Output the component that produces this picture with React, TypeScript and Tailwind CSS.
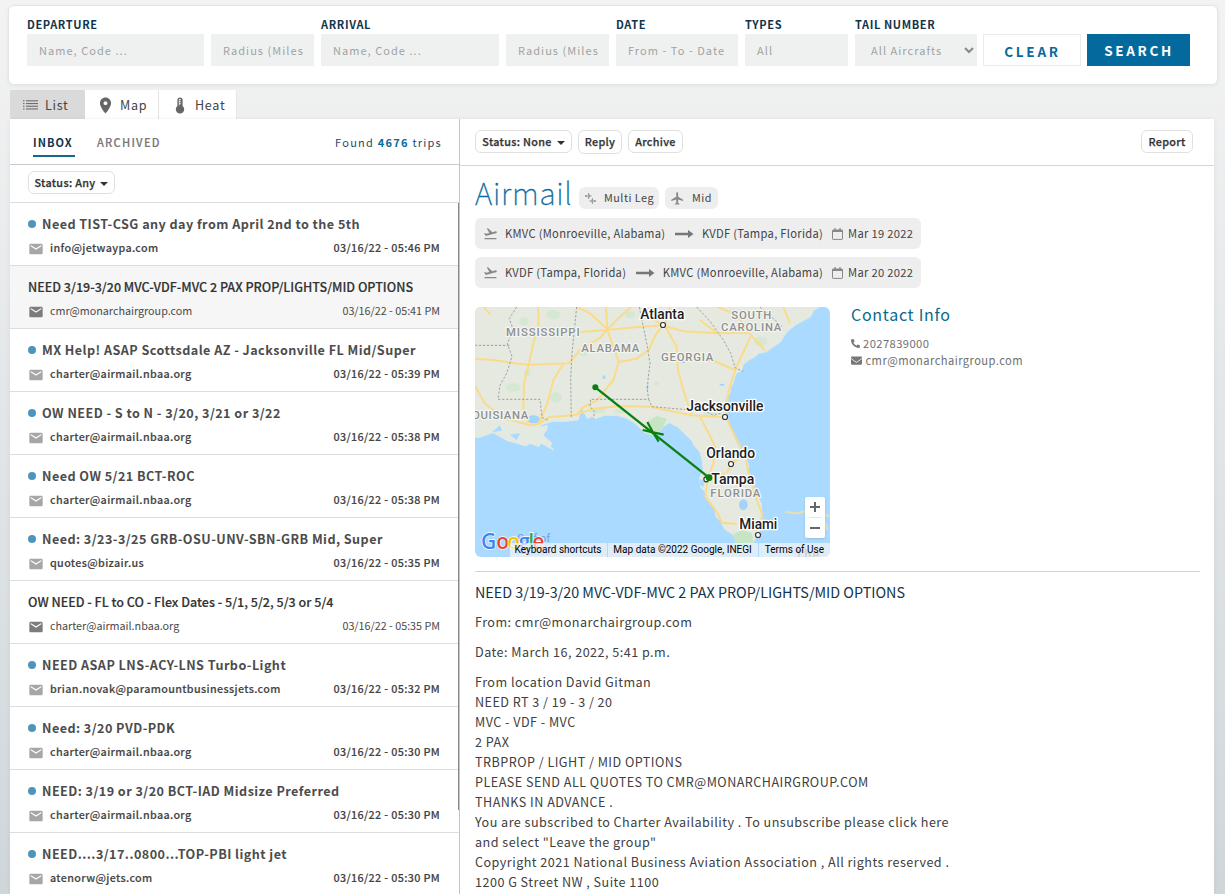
import React from "react";
import { MdEmail, MdFlight, MdFlightTakeoff, MdPlace } from "react-icons/md";
import { FaEnvelope, FaPhoneAlt } from "react-icons/fa";

type Trip = { title: string; from: string; time: string; read?: boolean; active?: boolean };

const trips: Trip[] = [
  { title: "Need TIST-CSG any day from April 2nd to the 5th", from: "info@jetwaypa.com", time: "03/16/22 - 05:46 PM" },
  { title: "NEED 3/19-3/20 MVC-VDF-MVC 2 PAX PROP/LIGHTS/MID OPTIONS", from: "cmr@monarchairgroup.com", time: "03/16/22 - 05:41 PM", read: true, active: true },
  { title: "MX Help! ASAP Scottsdale AZ - Jacksonville FL Mid/Super", from: "charter@airmail.nbaa.org", time: "03/16/22 - 05:39 PM" },
  { title: "OW NEED - S to N - 3/20, 3/21 or 3/22", from: "charter@airmail.nbaa.org", time: "03/16/22 - 05:38 PM" },
  { title: "Need OW 5/21 BCT-ROC", from: "charter@airmail.nbaa.org", time: "03/16/22 - 05:38 PM" },
  { title: "Need: 3/23-3/25 GRB-OSU-UNV-SBN-GRB Mid, Super", from: "quotes@bizair.us", time: "03/16/22 - 05:35 PM" },
  { title: "OW NEED - FL to CO - Flex Dates - 5/1, 5/2, 5/3 or 5/4", from: "charter@airmail.nbaa.org", time: "03/16/22 - 05:35 PM", read: true },
  { title: "NEED ASAP LNS-ACY-LNS Turbo-Light", from: "brian.novak@paramountbusinessjets.com", time: "03/16/22 - 05:32 PM" },
  { title: "Need: 3/20 PVD-PDK", from: "charter@airmail.nbaa.org", time: "03/16/22 - 05:30 PM" },
  { title: "NEED: 3/19 or 3/20 BCT-IAD Midsize Preferred", from: "charter@airmail.nbaa.org", time: "03/16/22 - 05:30 PM" },
  { title: "NEED....3/17..0800...TOP-PBI light jet", from: "atenorw@jets.com", time: "03/16/22 - 05:30 PM" },
];

const message = [
  "From location David Gitman",
  "NEED RT 3 / 19 - 3 / 20",
  "MVC - VDF - MVC",
  "2 PAX",
  "TRBPROP / LIGHT / MID OPTIONS",
  "PLEASE SEND ALL QUOTES TO CMR@MONARCHAIRGROUP.COM",
  "THANKS IN ADVANCE .",
  "You are subscribed to Charter Availability . To unsubscribe please click here",
  'and select "Leave the group"',
  "Copyright 2021 National Business Aviation Association , All rights reserved .",
  "1200 G Street NW , Suite 1100",
];

function Field({ label, text, className, textClass = "pl-3" }: { label?: string; text: string; className: string; textClass?: string }) {
  return (
    <div className={`shrink-0 ${className}`}>
      <div className="h-[18px] text-[11px] leading-[16px] font-bold tracking-[0.62px] text-[#12344a] whitespace-nowrap">{label}</div>
      <div className={`h-8 overflow-hidden bg-[#eff1f1] text-[11px] leading-[32px] tracking-[1.04px] whitespace-nowrap text-[#a0a3a3] ${textClass}`}>{text}</div>
    </div>
  );
}

function Caret() {
  return <span className="mt-[2px] h-0 w-0 border-x-4 border-t-4 border-x-transparent border-t-[#333]" />;
}

function Pill({ children, className = "" }: { children: React.ReactNode; className?: string }) {
  return (
    <button className={`flex h-[23px] items-center justify-center gap-[5px] rounded-[6px] border border-[#dfe1e1] bg-white text-[10.8px] leading-[21px] font-medium tracking-[0.32px] whitespace-nowrap text-[#333] [-webkit-text-stroke:0.25px_#333] ${className}`}>
      {children}
    </button>
  );
}

function ListIcon() {
  return (
    <svg width="15" height="10" viewBox="0 0 15 10" fill="#6c6c6c">
      {[0.3, 3, 5.7, 8.4].map((y) => (
        <g key={y}>
          <rect x="0" y={y} width="1.5" height="1.1" />
          <rect x="3" y={y} width="12" height="1.1" />
        </g>
      ))}
    </svg>
  );
}

function ThermoIcon() {
  return (
    <svg width="10" height="17" viewBox="0 0 10 17" fill="#666">
      <path d="M5 0.5a2.6 2.6 0 0 0-2.6 2.6v5.9a4.2 4.2 0 1 0 5.2 0V3.1A2.6 2.6 0 0 0 5 .5Z" />
      <path d="M4.2 2.5h1.6M4.2 4.6h1.6M4.2 6.7h1.6" stroke="#fff" strokeWidth="0.9" />
      <path d="M4.3 2.2v6" stroke="#fff" strokeWidth="0.7" />
    </svg>
  );
}

function LongArrow() {
  return (
    <svg width="19" height="10" viewBox="0 0 19 10" fill="#777">
      <path d="M0 3.8h13V1l5.5 4L13 9V6.2H0Z" />
    </svg>
  );
}

function CalendarIcon() {
  return (
    <svg width="11" height="12" viewBox="0 0 11 12" fill="none" stroke="#888">
      <rect x="0.5" y="2" width="10" height="9.4" rx="0.6" />
      <path d="M0.5 3h10" strokeWidth="2" />
      <path d="M3 0v2.5M8 0v2.5" strokeWidth="1.2" />
    </svg>
  );
}

function MultiLegIcon() {
  return (
    <svg width="11" height="12" viewBox="0 0 11 12" fill="none" stroke="#909090" strokeWidth="1.2">
      <path d="M0 4h6.5M3.4 1.2l0.9 2.8-0.9 2.8M0.9 2.9v2.2" />
      <path d="M4.4 9h6.4M7.7 6.4l-0.9 2.6 0.9 2.6M10 7.9v2.2" />
    </svg>
  );
}

function Leg({ from, to, date }: { from: string; to: string; date: string }) {
  return (
    <div className="flex h-[31px] w-[446px] items-center rounded-[6px] bg-[#eee] pl-2 text-[11.2px] leading-[31px] tracking-[0.28px] whitespace-nowrap text-[#444]">
      <MdFlightTakeoff className="mr-[7px] h-[15px] w-[15px] text-[#888]" />
      <span>{from}</span>
      <span className="mr-[7.5px] ml-[10px]"><LongArrow /></span>
      <span>{to}</span>
      <span className="mr-[5px] ml-[9px]"><CalendarIcon /></span>
      <span>{date}</span>
    </div>
  );
}

const land =
  "M15 21H1048L1030 32 1022 50 1000 62 978 74 960 88 946 102 932 126 908 142 888 156 866 160 858 168 834 182 818 196 816 212 800 218 794 232 790 248 782 262 780 280 766 298 762 318 764 340 772 362 786 392 800 428 814 458 832 484 836 500 828 508 844 546 862 586 874 612 876 650 872 688 862 708 848 729 800 732 790 704 764 688 752 664 738 650 734 622 712 594 704 574 692 562 688 536 700 508 696 480 690 456 672 436 664 420 640 398 622 380 598 368 580 380 570 394 546 404 524 398 508 382 490 366 468 354 440 346 404 346 376 356 364 350 352 356 344 340 330 344 324 360 290 364 250 364 214 374 212 382 232 376 230 392 214 404 226 412 246 430 240 440 252 450 232 440 214 428 206 440 180 430 168 438 140 430 112 422 90 410 70 398 50 404 30 412 15 412Z";

const roads = [
  "M15 176 70 180 134 190 178 194 240 192 296 190 M296 190 330 150 392 112 410 90 470 84 578 76",
  "M204 21 206 70 190 130 176 194 162 250 160 340 176 370",
  "M280 192 250 240 232 310 206 372 M15 258 44 310 100 354 180 376 206 372 236 352 320 344 336 324 380 302 430 240 446 186",
  "M408 21 412 90 430 140 446 186 500 176 536 150 556 106 578 76 M320 21 360 40 410 86 M484 21 450 50 412 88 M410 90 330 96",
  "M578 76 548 56 540 21 M578 76 640 94 742 100 836 98 M600 21 584 76 620 140 624 210 640 270 664 342",
  "M690 176 740 186 794 210 M742 100 690 60 M842 110 820 156 796 210 776 270 766 346 790 400 824 462 836 520 860 600 876 640 870 684",
  "M320 344 370 326 450 318 540 320 600 332 664 346 766 352 M690 350 716 400 736 440 730 490 712 540 706 590 740 636 756 668 800 672 M770 520 784 494 820 460 M720 540 764 520",
  "M742 21 800 44 836 98 884 150 M940 21 960 70 M40 21 62 44",
];

const borders = [
  "M140 21 118 56 130 90 112 130 126 170 110 220 90 256 84 298 H210L216 352 236 362",
  "M15 136H118 M320 21 306 160 302 240 304 356",
  "M508 21 532 140 540 190 534 240 532 270 536 298H362L360 320 374 336 370 356 M536 298 546 320 640 328 700 330 730 346 752 340",
  "M680 21 720 64 760 120 782 160 796 204 820 214 M870 21 920 64 936 80",
];

const greens: [number, number, number, number][] = [
  [250, 44, 20, 14], [162, 64, 14, 12], [130, 262, 22, 12], [258, 292, 18, 16], [382, 332, 26, 8], [480, 44, 14, 10],
  [872, 124, 20, 14], [720, 336, 22, 10], [340, 160, 12, 8], [172, 218, 10, 12], [560, 250, 8, 6], [450, 334, 16, 6],
];

const lakes: [number, number, number, number][] = [
  [820, 614, 13, 16], [788, 470, 5, 8], [190, 358, 20, 12], [756, 254, 8, 3], [532, 262, 3, 8], [640, 186, 4, 4], [402, 232, 4, 6],
];

const regions: [string, number, number, number][] = [
  ["MISSISSIPPI", 108, 107, 221], ["ALABAMA", 334, 155, 174], ["GEORGIA", 573, 182, 157], ["SOUTH", 784, 58, 120],
  ["CAROLINA", 753, 92, 181], ["OUISIANA", 6, 356, 169], ["FLORIDA", 721, 590, 150],
];

const cities: [string, number, number, number, number, number][] = [
  ["Atlanta", 511, 57, 132, 579, 75], ["Jacksonville", 649, 334, 231, 765, 351], ["Orlando", 709, 474, 146, 783, 492],
  ["Tampa", 724, 552, 129, 709, 538], ["Miami", 808, 688, 114, 864, 705],
];

function TripMap() {
  return (
    <div className="relative h-[250px] w-[355px] shrink-0 overflow-hidden rounded-[6px] bg-[#aadaff] font-['Roboto',sans-serif]">
      <svg width="355" height="250" viewBox="15 21 1065 750" className="block">
        <path d={land} fill="#e5e9df" stroke="#dcebe3" strokeWidth="3" />
        <path d="M15 412 40 380 90 400 150 432 210 430 246 446 220 416 228 380 200 384 150 392 90 388 15 370Z" fill="#e3eae2" />
        <path d="M524 396 532 366 560 348 590 356 580 380 570 394 546 404Z M798 730 790 704 814 690 846 700 850 728Z" fill="#c5e5c4" />
        {greens.map(([x, y, rx, ry], i) => <ellipse key={i} cx={x} cy={y} rx={rx} ry={ry} fill="#cbe6cb" opacity="0.6" />)}
        {lakes.map(([x, y, rx, ry], i) => <ellipse key={i} cx={x} cy={y} rx={rx} ry={ry} fill="#a3d3fb" />)}
        <path d="M688 536 704 546 700 562 690 556Z M336 322 344 352 328 352Z M66 396 90 376 96 392Z M120 404 150 400 140 420Z" fill="#aadaff" />
        {roads.map((d) => <path key={d} d={d} fill="none" stroke="#fadb8a" strokeWidth="6" strokeLinejoin="round" />)}
        <path d="M946 636 980 640 1008 634 M1066 668 1072 690 M1060 640 1078 650" fill="none" stroke="#eadfb0" strokeWidth="6" strokeLinejoin="round" />
        {borders.map((d) => <path key={d} d={d} fill="none" stroke="#999c9e" strokeWidth="2.8" strokeDasharray="7 5" />)}
        <g fontSize="34" fontWeight="500" fill="#8d8f91" stroke="#f3f5f0" strokeWidth="7" paintOrder="stroke" strokeLinejoin="round">
          {regions.map(([t, x, y, w]) => <text key={t} x={x} y={y} textLength={w}>{t}</text>)}
        </g>
        <g fontSize="41.5" fontWeight="500" fill="#202124" stroke="#fff" strokeWidth="8" paintOrder="stroke" strokeLinejoin="round">
          {cities.map(([t, x, y, w]) => <text key={t} x={x} y={y} textLength={w} lengthAdjust="spacingAndGlyphs">{t}</text>)}
        </g>
        {cities.map(([t, , , , cx, cy]) => <circle key={t} cx={cx} cy={cy} r="7.5" fill="#fff" stroke="#333" strokeWidth="3.5" />)}
        <g fill="none" stroke="#0a8010" strokeWidth="7">
          <path d="M376 262 717 533" />
          <path d="M518 390 549 397 532 366 M581 404 549 397 566 425" strokeWidth="6.5" />
        </g>
        <circle cx="376" cy="262" r="9" fill="#0a8010" />
        <circle cx="717" cy="533" r="10" fill="#0a8010" />
        <g fontSize="31" fill="#6c9fd8">
          <text x="142" y="727" textLength="98">Gulf of</text>
          <text x="142" y="766" textLength="100">Mexico</text>
        </g>
        <text x="976" y="776" fontSize="38" fontWeight="500" fill="#777" textLength="72">The</text>
        <g fontFamily="'Open Sans'" fontSize="63" fontWeight="600" stroke="#fff" strokeWidth="4" paintOrder="stroke">
          <text x="33" y="748" fill="#4285f4">G</text>
          <text x="79" y="748" fill="#ea4335">o</text>
          <text x="112" y="748" fill="#fbbc05">o</text>
          <text x="146" y="748" fill="#4285f4">g</text>
          <text x="175" y="748" fill="#34a853">l</text>
          <text x="187" y="748" fill="#ea4335">e</text>
        </g>
      </svg>
      <div className="absolute right-0 bottom-0 flex h-[14px] items-center text-[10px] leading-[14px] whitespace-nowrap text-black">
        <span className="bg-[#f5f5f5]/70 pr-[6px] pl-[5px]">Keyboard shortcuts</span>
        <span className="ml-px bg-[#f5f5f5]/70 pr-[6px] pl-[5px]">Map data ©2022 Google, INEGI</span>
        <span className="ml-px bg-[#f5f5f5]/70 px-[6px]">Terms of Use</span>
      </div>
      <div className="absolute right-[5px] bottom-[19px] flex h-[41px] w-5 flex-col items-center rounded-[2px] bg-white shadow">
        <svg width="20" height="41" viewBox="0 0 20 41" stroke="#666" strokeWidth="2">
          <path d="M5 10h10M10 5v10M5 31h10" />
          <path d="M4 20.5h12" stroke="#e6e6e6" strokeWidth="1" />
        </svg>
      </div>
    </div>
  );
}

function TripRow({ trip }: { trip: Trip }) {
  return (
    <div className={`h-[63px] shrink-0 border-b border-[#dcdede] pr-[19px] pl-[18px] ${trip.active ? "bg-[#f6f6f6]" : "bg-white"}`}>
      <div className="flex h-[42px] items-center gap-[6px] whitespace-nowrap">
        {!trip.read && <span className="h-2 w-2 rounded-full bg-[#4d96bb]" />}
        <span className={trip.read ? "text-[12.55px] leading-[20px] font-medium text-[#333] [-webkit-text-stroke:0.15px_#333]" : "text-[12.6px] leading-[20px] font-bold tracking-[0.45px] text-[#4c4c4c]"}>{trip.title}</span>
      </div>
      <div className={`-mt-[5px] flex h-4 items-center text-[10.75px] leading-[16px] whitespace-nowrap ${trip.read ? "text-[#4a4a4a]" : "font-medium tracking-[0.35px] text-[#444] [-webkit-text-stroke:0.15px_#444]"}`}>
        <MdEmail className={`mt-px mr-[6px] h-4 w-4 ${trip.read ? "text-[#7c7c7c]" : "text-[#a6a6a6]"}`} />
        <span>{trip.from}</span>
        <span className="ml-auto">{trip.time}</span>
      </div>
    </div>
  );
}

export default function App() {
  return (
    <div className="flex h-[894px] w-[1225px] flex-col overflow-hidden bg-linear-to-b from-[#f3f3f3] via-[#e3e6e8] via-45% to-[#cfd6da] font-['Noto_Sans_CJK_SC',sans-serif] text-[#444]">
      <header className="mt-[5px] ml-2 flex h-[80px] w-[1210px] shrink-0 items-start rounded-[6px] border border-[#e4e6e6] bg-white pt-[10px] pl-[18px] shadow-[0_1px_4px_rgba(0,0,0,0.06)]">
        <Field label="DEPARTURE" text="Name, Code ..." className="w-[177px]" />
        <Field text="Radius (Miles" className="ml-[7px] w-[103px]" />
        <Field label="ARRIVAL" text="Name, Code ..." className="ml-[7px] w-[178px]" />
        <Field text="Radius (Miles" className="ml-[7px] w-[103px]" />
        <Field label="DATE" text="From - To - Date" className="ml-[7px] w-[122px]" />
        <Field label="TYPES" text="All" className="ml-[7px] w-[103px]" />
        <div className="relative ml-[7px]">
          <Field label="TAIL NUMBER" text="All Aircrafts" className="w-[122px]" textClass="pl-4" />
          <svg width="10" height="7" viewBox="0 0 10 7" className="absolute right-[3px] bottom-[12px]" fill="none" stroke="#888" strokeWidth="2">
            <path d="M1 1l4 4 4-4" />
          </svg>
        </div>
        <button className="mt-[18px] ml-[6px] h-8 w-[98px] border border-[#e6ebeb] bg-white pt-[2px] pl-px text-[13.5px] leading-[28px] font-bold tracking-[2.75px] text-[#0a6a9c]">CLEAR</button>
        <button className="mt-[18px] ml-[6px] h-8 w-[103px] bg-[#046a9d] pl-px text-[13.5px] leading-[32px] font-bold tracking-[2.68px] text-white">SEARCH</button>
      </header>

      <nav className="mt-[5px] ml-[10px] flex h-[29px] shrink-0 text-[12.6px] leading-[30px] tracking-[0.7px] text-[#444]">
        <div className="flex h-[30px] w-[75px] items-center gap-[7px] bg-[#dadada] pl-[13px]"><ListIcon />List</div>
        <div className="flex h-[30px] w-[74px] items-center gap-[5px] border-r border-[#e3e3e3] bg-white pl-[11px]"><MdPlace className="h-[19px] w-[19px] text-[#666]" />Map</div>
        <div className="flex h-[30px] w-[78px] items-center gap-[10px] rounded-tr-[2px] border-r border-[#e6e6e6] bg-white pl-[16px]"><ThermoIcon />Heat</div>
      </nav>

      <main className="ml-[10px] flex h-[775px] w-[1204px] shrink-0 bg-white shadow-[0_0_5px_rgba(0,0,0,0.06)]">
        <section className="flex w-[450px] shrink-0 flex-col border-r border-[#c4c4c4]">
          <div className="flex h-[46px] shrink-0 items-start border-b border-[#c9cbcb] pr-[17px] pl-[23px] pt-[12px] text-[11px] leading-[23px]">
            <div className="h-[26px] w-[42px] border-b-2 border-[#14698a] font-bold tracking-[1.05px] text-[#12344a]">INBOX</div>
            <div className="ml-[22px] font-medium tracking-[1.28px] text-[#777] [-webkit-text-stroke:0.15px_#777]">ARCHIVED</div>
            <div className="ml-auto text-[11px] tracking-[1.24px] text-[#1f4a60]">Found <b className="text-[#0a6a9c]">4676</b> trips</div>
          </div>
          <div className="flex h-[38px] shrink-0 items-start border-b border-[#dcdede] pt-[6px] pl-[18px]">
            <Pill className="w-[87px]">Status: Any<Caret /></Pill>
          </div>
          <div className="relative flex flex-1 flex-col overflow-hidden">
            {trips.map((t, i) => <TripRow key={i} trip={t} />)}
            <div className="absolute top-0 right-0 h-[607px] w-px bg-[#8a8a8a]" />
          </div>
        </section>

        <section className="flex flex-1 flex-col overflow-hidden">
          <div className="flex h-[47px] shrink-0 items-start gap-[6px] border-b border-[#d4d6d6] pt-[11px] pr-[21px] pl-[15px]">
            <Pill className="w-[97px]">Status: None<Caret /></Pill>
            <Pill className="h-[24px] w-[44px] pb-[2px]">Reply</Pill>
            <Pill className="w-[55px]">Archive</Pill>
            <Pill className="ml-auto w-[52px]">Report</Pill>
          </div>
          <div className="flex flex-col pl-[15px]">
            <div className="flex h-[52px] items-start text-[10.8px] leading-[20px] tracking-[0.5px] whitespace-nowrap">
              <h1 className="w-[104px] pt-[6px] text-[30px] leading-[40px] font-thin tracking-[0.75px] text-[#0a6a9c] [-webkit-text-stroke:0.35px_#0a6a9c]">Airmail</h1>
              <div className="mt-[21px] flex h-[22px] w-[80px] items-center rounded-[6px] bg-[#eee] pl-[6px]"><MultiLegIcon /><span className="mb-[2px] ml-[8px]">Multi Leg</span></div>
              <div className="mt-[21px] ml-[6px] flex h-[22px] w-[53px] items-center rounded-[6px] bg-[#eee] pl-[5px]"><MdFlight className="h-[15px] w-[15px] text-[#888]" /><span className="mb-[2px] ml-[7px]">Mid</span></div>
            </div>
            <div className="flex flex-col gap-2">
              <Leg from="KMVC (Monroeville, Alabama)" to="KVDF (Tampa, Florida)" date="Mar 19 2022" />
              <Leg from="KVDF (Tampa, Florida)" to="KMVC (Monroeville, Alabama)" date="Mar 20 2022" />
            </div>
            <div className="mt-[19px] flex gap-[21px]">
              <TripMap />
              <div className="text-[11.2px] leading-[17px] text-[#707070]">
                <h2 className="-mt-px mb-[11px] h-[18px] text-[16px] leading-[16px] tracking-[0.72px] text-[#0a6a8c]">Contact Info</h2>
                <div className="flex items-center gap-[3px] tracking-[0.43px]"><FaPhoneAlt className="h-[9px] w-[9px] text-[#777]" />2027839000</div>
                <div className="flex items-center gap-[3.5px] tracking-[0.41px]"><FaEnvelope className="h-[11px] w-[11px] text-[#777]" />cmr@monarchairgroup.com</div>
              </div>
            </div>
            <div className="mt-[14px] w-[725px] border-t border-[#d4d6d6] pt-[10px] text-[12.6px] leading-[20px] tracking-[0.47px] whitespace-nowrap text-[#404040]">
              <h3 className="text-[14.32px] tracking-normal text-[#12344a]">NEED 3/19-3/20 MVC-VDF-MVC 2 PAX PROP/LIGHTS/MID OPTIONS</h3>
              <p className="mt-[10px]">From: cmr@monarchairgroup.com</p>
              <p className="mt-[10px] mb-[10px]">Date: March 16, 2022, 5:41 p.m.</p>
              {message.map((m) => <p key={m}>{m}</p>)}
            </div>
          </div>
        </section>
      </main>
    </div>
  );
}
